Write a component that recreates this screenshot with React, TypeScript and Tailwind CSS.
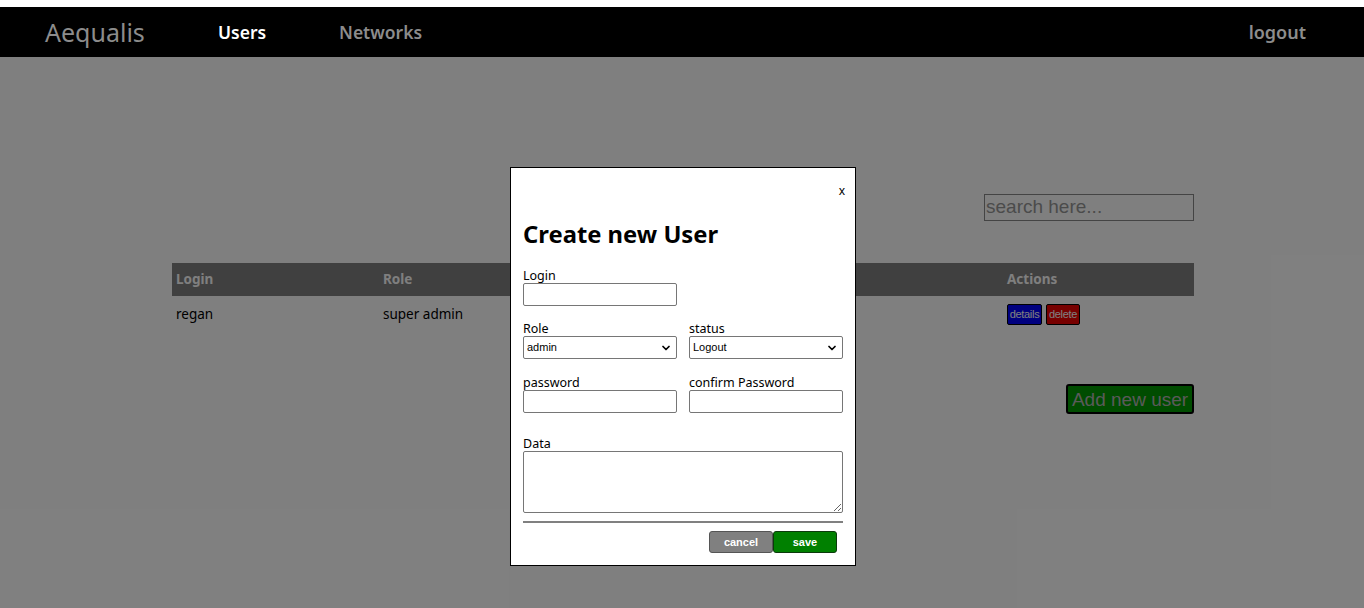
import { ChevronDown } from 'lucide-react'

const ui = { fontFamily: '"Noto Sans", "Open Sans", sans-serif' }
const arial = { fontFamily: '"Liberation Sans", Arial, sans-serif' }

function Field({ label, children }: { label: string; children: React.ReactNode }) {
  return (
    <div className="flex flex-col w-[154px]">
      <label className="text-[12.5px] leading-[15px] text-black">{label}</label>
      {children}
    </div>
  )
}

function Select({ value }: { value: string }) {
  return (
    <div className="relative h-[23px] border border-[#767676] rounded-[2px] bg-white flex items-center px-[3px]">
      <span className="text-[11px] text-black" style={arial}>
        {value}
      </span>
      <ChevronDown className="absolute right-[4px] top-[5px] w-[12px] h-[12px]" strokeWidth={3.5} />
    </div>
  )
}

function Input() {
  return <div className="h-[23px] border border-[#767676] rounded-[2px] bg-white" />
}

export default function App() {
  return (
    <div className="relative w-[1364px] h-[608px] bg-white overflow-hidden" style={ui}>
      <div className="h-[7px] bg-white" />

      {/* top nav */}
      <nav className="relative z-20 h-[50px] bg-black flex items-center pl-[45px] pr-[58px]">
        <span className="text-[25px] text-[#8c8c8c] w-[173px] pt-[2px]">Aequalis</span>
        <span className="text-[17.5px] font-semibold text-white w-[121px]">Users</span>
        <span className="text-[17.5px] font-semibold text-[#8c8c8c]">Networks</span>
        <span className="ml-auto text-[18px] font-semibold text-[#8c8c8c]">logout</span>
      </nav>

      {/* page content */}
      <main className="w-[1022px] ml-[172px] pt-[137px]">
        <div className="flex justify-end">
          <div className="w-[210px] h-[27px] border border-[#888] flex items-center px-[1px]">
            <span className="text-[19px] text-[#979797]" style={arial}>
              search here...
            </span>
          </div>
        </div>

        <div className="mt-[42px]">
          <div className="grid grid-cols-[207px_207px_207px_210px_1fr] h-[33px] items-center bg-[#808080] text-white text-[13.5px] font-bold px-[4px]">
            <span>Login</span>
            <span>Role</span>
            <span>Status</span>
            <span>Data</span>
            <span>Actions</span>
          </div>
          <div className="grid grid-cols-[207px_207px_207px_210px_1fr] h-[37px] items-center text-black text-[13.5px] px-[4px]">
            <span>regan</span>
            <span>super admin</span>
            <span>Logout</span>
            <span></span>
            <div className="flex gap-[4px]" style={arial}>
              <button className="h-[21px] w-[35px] bg-[#0000ff] text-white text-[11px] border border-black rounded-[2px] tracking-[-0.3px]">
                details
              </button>
              <button className="h-[21px] w-[34px] bg-[#ee0000] text-white text-[11px] border border-black rounded-[2px] tracking-[-0.3px]">
                delete
              </button>
            </div>
          </div>
        </div>

        <div className="flex justify-end mt-[51px]">
          <button
            className="h-[30px] w-[128px] bg-[#009900] text-[#b4b4b4] text-[19px] font-medium border-2 border-black rounded-[3px] leading-none"
            style={arial}
          >
            Add new user
          </button>
        </div>
      </main>

      {/* overlay */}
      <div className="absolute left-0 right-0 top-[57px] bottom-0 bg-black/50 z-10" />

      {/* modal */}
      <div className="absolute z-20 left-[510px] top-[167px] w-[346px] h-[399px] bg-white border border-black px-[12px]">
        <div className="flex justify-end pt-[14px]">
          <span className="text-[12px] text-black mr-[-2px]">x</span>
        </div>
        <h2 className="text-[23.8px] font-bold text-black mt-[19px] leading-[30px]">Create new User</h2>

        <div className="mt-[19px]">
          <Field label="Login">
            <Input />
          </Field>
        </div>

        <div className="flex gap-[12px] mt-[15px]">
          <Field label="Role">
            <Select value="admin" />
          </Field>
          <Field label="status">
            <Select value="Logout" />
          </Field>
        </div>

        <div className="flex gap-[12px] mt-[16px]">
          <Field label="password">
            <Input />
          </Field>
          <Field label="confirm Password">
            <Input />
          </Field>
        </div>

        <div className="flex flex-col mt-[23px]">
          <label className="text-[12.5px] leading-[15px] text-black">Data</label>
          <textarea className="h-[62px] w-[320px] border border-[#767676] rounded-[2px] resize-y bg-white" readOnly />
        </div>

        <div className="h-[2px] bg-[#808080] w-[320px] mt-[8px]" />

        <div className="flex justify-end pr-[6px] mt-[8px]" style={arial}>
          <button className="w-[64px] h-[22px] bg-[#808080] text-white text-[11px] font-bold border border-[#555] rounded-[3px]">
            cancel
          </button>
          <button className="w-[64px] h-[22px] bg-[#008000] text-white text-[11px] font-bold border border-[#0c3a0c] rounded-[3px]">
            save
          </button>
        </div>
      </div>
    </div>
  )
}
